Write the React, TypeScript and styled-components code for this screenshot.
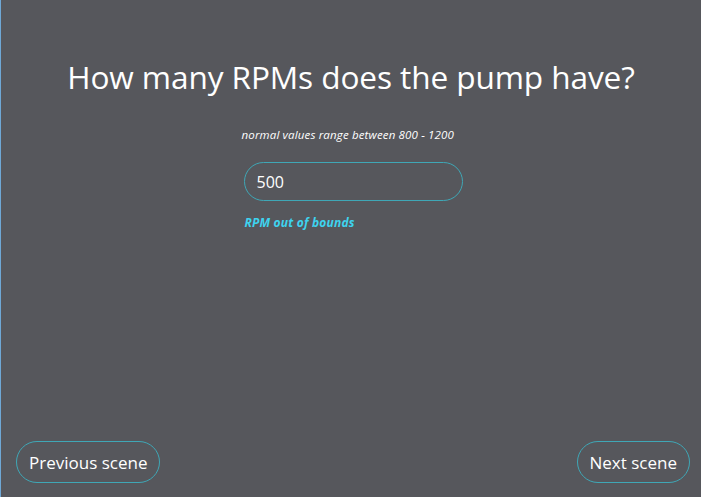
import React from "react";
import styled, { createGlobalStyle } from "styled-components";

const Global = createGlobalStyle`
  html, body { margin: 0; padding: 0; }
  body { background: #56575c; }
  #root { height: 497px; }
`;

const Page = styled.div`
  box-sizing: border-box;
  width: 701px;
  height: 497px;
  background: #56575c;
  border-left: 1px solid #6fa8d6;
  display: flex;
  flex-direction: column;
  font-family: "Open Sans", "Noto Sans", sans-serif;
  color: #ffffff;
`;

const Main = styled.div`
  flex: 1;
  display: flex;
  flex-direction: column;
  align-items: center;
  padding-top: 52px;
`;

const Title = styled.h1`
  margin: 0;
  font-size: 31.6px;
  font-weight: 400;
  line-height: 50px;
  letter-spacing: -0.1px;
`;

const Field = styled.div`
  margin-top: 26px;
  width: 218px;
  display: flex;
  flex-direction: column;
  margin-left: 3px;
`;

const Hint = styled.div`
  font-size: 11.5px;
  font-style: italic;
  line-height: 14px;
  margin-left: -2px;
  letter-spacing: 0.15px;
  white-space: nowrap;
`;

const Input = styled.input`
  box-sizing: border-box;
  margin-top: 20px;
  width: 219px;
  height: 39px;
  border: 1.5px solid #3fa7b6;
  border-radius: 20px;
  background: transparent;
  color: #ffffff;
  font-family: "Open Sans", "Noto Sans", sans-serif;
  font-size: 16px;
  padding: 0 12px;
  outline: none;
`;

const ErrorText = styled.div`
  margin-top: 13px;
  margin-left: 1px;
  font-size: 12px;
  font-weight: 700;
  font-style: italic;
  letter-spacing: 0.2px;
  color: #3ed3ef;
`;

const Footer = styled.div`
  display: flex;
  justify-content: space-between;
  padding: 0 11px 14px 15px;
`;

const NavButton = styled.button`
  box-sizing: border-box;
  height: 42px;
  padding: 0 12px;
  border: 1.5px solid #3fa7b6;
  border-radius: 21px;
  background: transparent;
  color: #ffffff;
  font-family: "Open Sans", "Noto Sans", sans-serif;
  font-size: 17px;
  cursor: pointer;
`;

export default function App() {
  return (
    <>
      <Global />
      <Page>
        <Main>
          <Title>How many RPMs does the pump have?</Title>
          <Field>
            <Hint>normal values range between 800 - 1200</Hint>
            <Input defaultValue="500" />
            <ErrorText>RPM out of bounds</ErrorText>
          </Field>
        </Main>
        <Footer>
          <NavButton>Previous scene</NavButton>
          <NavButton>Next scene</NavButton>
        </Footer>
      </Page>
    </>
  );
}
